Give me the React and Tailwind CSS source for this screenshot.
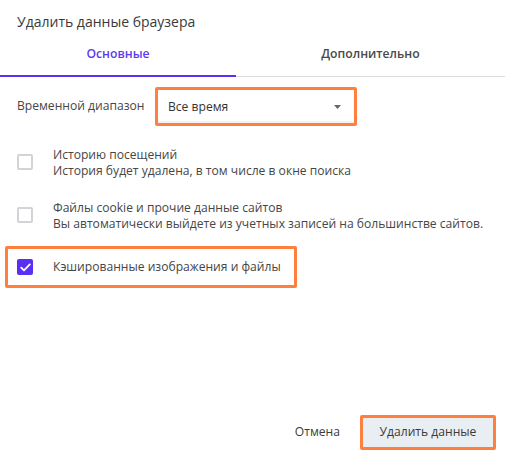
import { useState } from "react";

const font = { fontFamily: '"Open Sans", "Noto Sans", sans-serif' };

function CheckRow({ checked, title, subtitle, onToggle, boxTop = "pt-[7px]" }) {
  return (
    <div className="flex items-start cursor-pointer" onClick={onToggle}>
      <div className={`w-[36px] flex ${boxTop}`}>
        {checked ? (
          <div className="w-[16px] h-[16px] rounded-[2px] bg-[#5b2ef4] flex items-center justify-center">
            <svg width="11" height="9" viewBox="0 0 11 9" fill="none">
              <path d="M1.2 4.6 L4 7.3 L9.8 1.4" stroke="white" strokeWidth="1.8" strokeLinecap="round" strokeLinejoin="round" />
            </svg>
          </div>
        ) : (
          <div className="w-[16px] h-[16px] rounded-[2px] border-2 border-[#d2d2d7] bg-white" />
        )}
      </div>
      <div className="text-[12.1px] leading-[16px] text-[#464646] whitespace-nowrap">
        <div>{title}</div>
        {subtitle && <div>{subtitle}</div>}
      </div>
    </div>
  );
}

export default function App() {
  const [tab, setTab] = useState("main");
  const [history, setHistory] = useState(false);
  const [cookies, setCookies] = useState(false);
  const [cache, setCache] = useState(true);

  return (
    <div className="w-[505px] h-[459px] bg-white flex flex-col overflow-hidden" style={font}>
      {/* заголовок */}
      <div className="pl-[17px] pt-[11px] text-[14px] leading-[22px] text-[#3a3a3a]">
        Удалить данные браузера
      </div>

      {/* вкладки */}
      <div className="flex mt-[3px] border-b border-[#dcdcdc] text-[12.2px] font-semibold">
        <button
          className={`w-[236px] h-[41px] pb-[2px] border-b-2 -mb-px ${
            tab === "main" ? "border-[#5a2ff2] text-[#5a3cf0]" : "border-transparent text-[#4a4a4a]"
          }`}
          onClick={() => setTab("main")}
        >
          Основные
        </button>
        <button
          className={`flex-1 h-[41px] pb-[2px] border-b-2 -mb-px ${
            tab === "extra" ? "border-[#5a2ff2] text-[#5a3cf0]" : "border-transparent text-[#4a4a4a]"
          }`}
          onClick={() => setTab("extra")}
        >
          Дополнительно
        </button>
      </div>

      {/* временной диапазон */}
      <div className="flex items-center mt-[10px] pl-[17px]">
        <div className="text-[12.1px] text-[#464646] w-[138px]">Временной диапазон</div>
        <div className="w-[202px] h-[39px] border-[3px] border-[#ff7f3f] rounded-[2px] flex items-center justify-between pl-[10px] pr-[13px] bg-white shadow-[inset_0_-2px_2px_rgba(0,0,0,0.06)]">
          <span className="text-[12.1px] text-[#333] mt-[2px]">Все время</span>
          <svg width="7" height="4" viewBox="0 0 7 4">
            <path d="M0 0 H7 L3.5 4 Z" fill="#666" />
          </svg>
        </div>
      </div>

      {/* чекбоксы */}
      <div className="pl-[17px] mt-[21px]">
        <CheckRow
          checked={history}
          onToggle={() => setHistory(!history)}
          title="Историю посещений"
          subtitle="История будет удалена, в том числе в окне поиска"
        />
      </div>
      <div className="pl-[17px] mt-[21px]">
        <CheckRow
          checked={cookies}
          onToggle={() => setCookies(!cookies)}
          title="Файлы cookie и прочие данные сайтов"
          subtitle="Вы автоматически выйдете из учетных записей на большинстве сайтов."
        />
      </div>
      <div className="ml-[5px] mt-[14px] w-[292px] h-[42px] border-[3px] border-[#ff7f3f] rounded-[2px] flex items-center pl-[9px]">
        <CheckRow
          checked={cache}
          onToggle={() => setCache(!cache)}
          boxTop="pt-0"
          title="Кэшированные изображения и файлы"
        />
      </div>

      {/* кнопки */}
      <div className="mt-auto mb-[9px] flex items-center justify-end pr-[9px]">
        <button className="text-[12.1px] text-[#3a3a3a] mr-[20px]">Отмена</button>
        <button className="w-[136px] h-[35px] border-[3px] border-[#ff7f3f] rounded-[2px] bg-[#e9eef2] text-[12.1px] text-[#3a3a3a]">
          Удалить данные
        </button>
      </div>
    </div>
  );
}
